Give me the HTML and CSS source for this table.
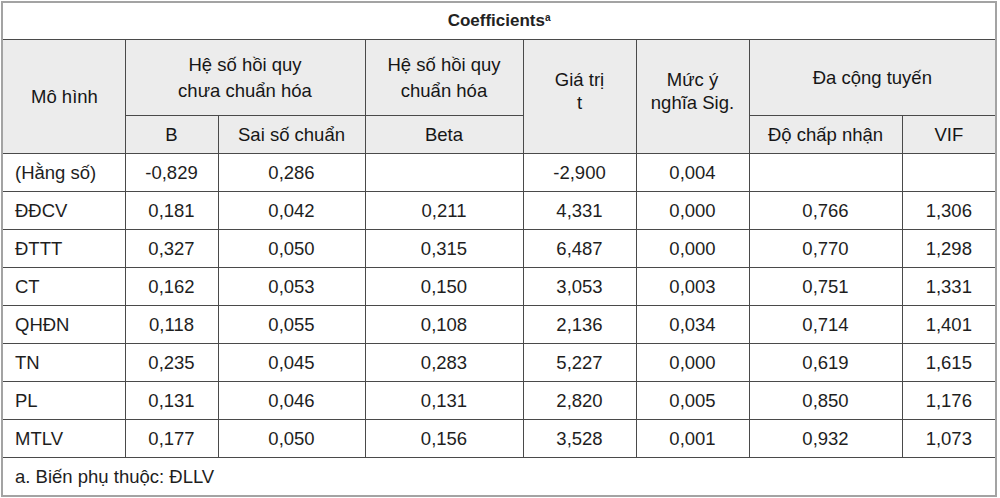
FILE: index.html
```html
<!DOCTYPE html>
<html lang="vi">
<head>
<meta charset="utf-8">
<title>Coefficients</title>
<link rel="stylesheet" href="styles.css">
</head>
<body>
<table class="coef">
  <colgroup>
    <col class="c1"><col class="c2"><col class="c3"><col class="c4"><col class="c5"><col class="c6"><col class="c7"><col class="c8">
  </colgroup>
  <tr class="title-row"><td colspan="8" class="title">Coefficients<sup>a</sup></td></tr>
  <tr class="head1">
    <th rowspan="2" class="first">Mô hình</th>
    <th colspan="2">Hệ số hồi quy<br>chưa chuẩn hóa</th>
    <th>Hệ số hồi quy<br>chuẩn hóa</th>
    <th rowspan="2" class="up">Giá trị<br>t</th>
    <th rowspan="2" class="up">Mức ý<br>nghĩa Sig.</th>
    <th colspan="2" class="multi">Đa cộng tuyến</th>
  </tr>
  <tr class="head2">
    <th>B</th><th>Sai số chuẩn</th><th>Beta</th><th>Độ chấp nhận</th><th>VIF</th>
  </tr>
  <tr><td class="first">(Hằng số)</td><td>-0,829</td><td>0,286</td><td></td><td>-2,900</td><td>0,004</td><td></td><td></td></tr>
  <tr><td class="first">ĐĐCV</td><td>0,181</td><td>0,042</td><td>0,211</td><td>4,331</td><td>0,000</td><td>0,766</td><td>1,306</td></tr>
  <tr><td class="first">ĐTTT</td><td>0,327</td><td>0,050</td><td>0,315</td><td>6,487</td><td>0,000</td><td>0,770</td><td>1,298</td></tr>
  <tr><td class="first">CT</td><td>0,162</td><td>0,053</td><td>0,150</td><td>3,053</td><td>0,003</td><td>0,751</td><td>1,331</td></tr>
  <tr><td class="first">QHĐN</td><td>0,118</td><td>0,055</td><td>0,108</td><td>2,136</td><td>0,034</td><td>0,714</td><td>1,401</td></tr>
  <tr><td class="first">TN</td><td>0,235</td><td>0,045</td><td>0,283</td><td>5,227</td><td>0,000</td><td>0,619</td><td>1,615</td></tr>
  <tr><td class="first">PL</td><td>0,131</td><td>0,046</td><td>0,131</td><td>2,820</td><td>0,005</td><td>0,850</td><td>1,176</td></tr>
  <tr><td class="first">MTLV</td><td>0,177</td><td>0,050</td><td>0,156</td><td>3,528</td><td>0,001</td><td>0,932</td><td>1,073</td></tr>
  <tr class="foot-row"><td colspan="8" class="foot">a. Biến phụ thuộc: ĐLLV</td></tr>
</table>
</body>
</html>
```
FILE: styles.css
```css
html, body {
  margin: 0;
  padding: 0;
  background: #ffffff;
}
body {
  padding: 1px 0 0 1px;
  font-family: "Liberation Sans", Arial, sans-serif;
  color: #1e1e1e;
}
.coef {
  border-collapse: collapse;
  table-layout: fixed;
  width: 996px;
  border: 2px solid #a3a3a3;
  font-size: 18.5px;
}
.c1 { width: 123px; }
.c2 { width: 93px; }
.c3 { width: 147px; }
.c4 { width: 158px; }
.c5 { width: 113px; }
.c6 { width: 113px; }
.c7 { width: 153px; }
.c8 { width: 94px; }
.coef td, .coef th {
  border: 1px solid #4a4a4a;
  text-align: center;
  font-weight: normal;
  padding: 0;
  height: 37px;
  line-height: 24px;
}
.coef th {
  background: #ececec;
  color: #161616;
}
.coef .first {
  text-align: left;
  padding-left: 12px;
}
.coef th.first {
  padding-left: 28px;
}
.coef .title-row td {
  height: 36px;
}
.coef .title {
  font-size: 17px;
  font-weight: bold;
  color: #222;
}
.title sup {
  font-size: 10px;
  font-weight: bold;
  vertical-align: 5px;
  line-height: 0;
}
.coef .head1 th {
  height: 75px;
  vertical-align: middle;
  line-height: 26px;
}
.coef .head1 th.up {
  vertical-align: top;
  padding-top: 28px;
  line-height: 23px;
  height: auto;
}
.coef .foot {
  text-align: left;
  padding-left: 12px;
}
```
